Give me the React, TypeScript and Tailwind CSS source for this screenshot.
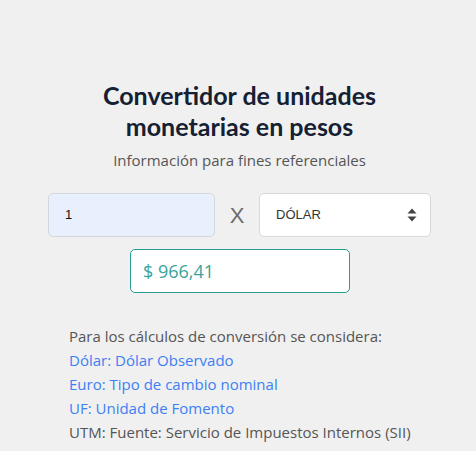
import React from 'react';

export default function App() {
  return (
    <div className="min-h-[451px] w-full bg-[#f0f0f0] font-['Open_Sans',sans-serif]">
      <div className="pt-[80px] pl-[48px] pr-[45px]">
        <h1 className="text-center font-['Lato',sans-serif] text-[25px] font-bold leading-[31px] text-[#152033]">
          Convertidor de unidades
          <br />
          monetarias en pesos
        </h1>
        <p className="mt-[6px] text-center text-[15px] leading-[24px] text-[#555]">
          Información para fines referenciales
        </p>

        <div className="mt-[21px] flex items-center">
          <div className="flex h-[44px] w-[167px] items-center rounded-[5px] border border-[#d4d8de] bg-[#e8f0fe] pl-[16px] font-['Liberation_Sans',Arial,sans-serif] text-[13px] text-[#111]">
            1
          </div>
          <div className="flex w-[44px] justify-center font-['Liberation_Sans',Arial,sans-serif] text-[22px] text-[#6b6b6b]">
            X
          </div>
          <div className="flex h-[44px] w-[172px] items-center justify-between rounded-[5px] border border-[#d9d9d9] bg-white pl-[16px] pr-[13px] font-['Liberation_Sans',Arial,sans-serif] text-[13px] text-[#333]">
            <span>DÓLAR</span>
            <svg width="10" height="14" viewBox="0 0 10 14">
              <path d="M5 0.5 L9.5 5.5 L0.5 5.5 Z" fill="#444" />
              <path d="M5 13.5 L9.5 8.5 L0.5 8.5 Z" fill="#444" />
            </svg>
          </div>
        </div>

        <div className="mt-[12px] flex justify-center">
          <div className="ml-[1px] flex h-[44px] w-[220px] items-center rounded-[5px] border border-[#2a9d93] bg-white pl-[12px] text-[18px] text-[#3aa39a]">
            $ 966,41
          </div>
        </div>

        <div className="mt-[31px] pl-[21px] text-[15px] leading-[24px] text-[#555]">
          <p>Para los cálculos de conversión se considera:</p>
          <p className="text-[#3d7ff5]">Dólar: Dólar Observado</p>
          <p className="text-[#3d7ff5]">Euro: Tipo de cambio nominal</p>
          <p className="text-[#3d7ff5]">UF: Unidad de Fomento</p>
          <p>UTM: Fuente: Servicio de Impuestos Internos (SII)</p>
        </div>
      </div>
    </div>
  );
}
